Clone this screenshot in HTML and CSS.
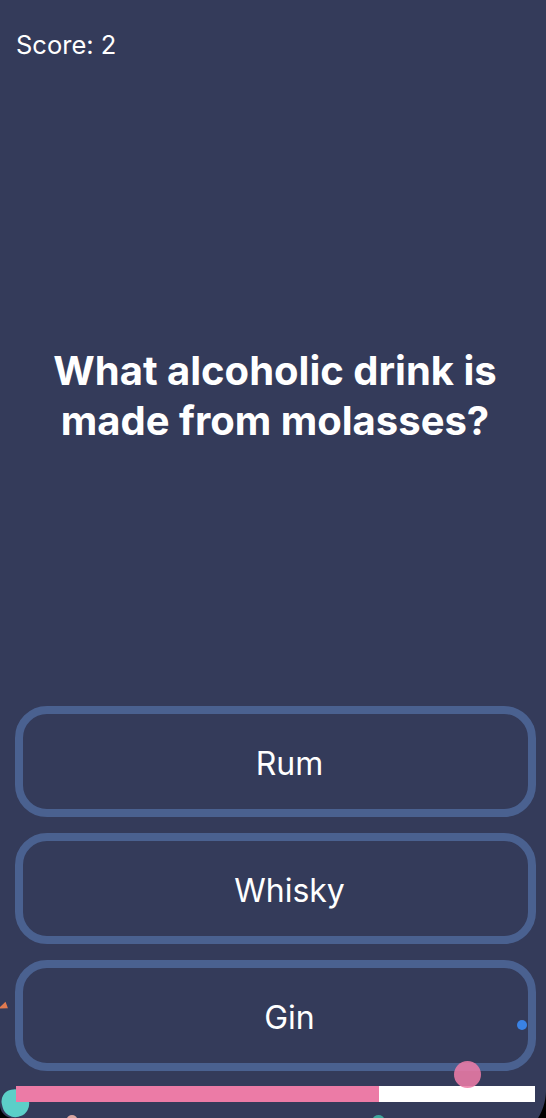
FILE: index.html
```html
<!DOCTYPE html>
<html lang="en">
<head>
<meta charset="utf-8">
<title>Quiz</title>
<link rel="stylesheet" href="styles.css">
</head>
<body>
<div class="screen">
  <div class="score">Score: 2</div>
  <div class="question-area">
    <h1 class="question">What alcoholic drink is<br>made from molasses?</h1>
  </div>
  <div class="answers">
    <button class="answer">Rum</button>
    <button class="answer">Whisky</button>
    <button class="answer">Gin</button>
  </div>
  <div class="progress"><div class="progress-fill" style="width:70%"></div></div>

  <span class="confetti c-orange"></span>
  <span class="confetti c-blue"></span>
  <span class="confetti c-pink"></span>
  <span class="confetti c-teal"></span>
  <span class="confetti c-peach"></span>
  <span class="confetti c-teal2"></span>
  <span class="corner c-left"></span>
  <span class="corner c-right"></span>
</div>
</body>
</html>
```
FILE: styles.css
```css
html, body {
  margin: 0;
  padding: 0;
  background: #343b5a;
}
.screen {
  position: relative;
  width: 546px;
  height: 1118px;
  overflow: hidden;
  display: flex;
  flex-direction: column;
  font-family: Inter, "Noto Sans", sans-serif;
  color: #ffffff;
  background: #343b5a;
}
.score {
  padding: 29px 0 0 16px;
  font-size: 25.5px;
  line-height: 32px;
  font-weight: 400;
}
.question-area {
  flex: 1;
  display: flex;
  align-items: center;
  justify-content: center;
  padding-top: 24px;
}
.question {
  margin: 0;
  text-align: center;
  font-size: 40px;
  line-height: 50px;
  font-weight: 700;
  padding-left: 4px;
}
.answers {
  display: flex;
  flex-direction: column;
  gap: 16px;
  padding: 0 10px 0 15px;
}
.answer {
  height: 111px;
  border: 8px solid #4a6190;
  border-radius: 32px;
  background: transparent;
  color: #ffffff;
  font-family: Inter, "Noto Sans", sans-serif;
  font-size: 32px;
  font-weight: 400;
  padding: 3px 0 0 28px;
  text-align: center;
}
.progress {
  position: relative;
  z-index: 2;
  margin: 15px 11px 16px 16px;
  height: 16px;
  background: #ffffff;
  display: flex;
}
.progress-fill {
  background: #ec7ba6;
  height: 100%;
}
.confetti {
  position: absolute;
  display: block;
}
.c-orange {
  left: -2px;
  top: 1003px;
  width: 0;
  height: 0;
  border-top: 4px solid transparent;
  border-bottom: 3px solid transparent;
  border-right: 9px solid #e07a50;
  transform: rotate(-20deg);
}
.c-blue {
  left: 517px;
  top: 1020px;
  width: 10px;
  height: 10px;
  border-radius: 50%;
  background: #3a82e4;
}
.c-pink {
  left: 454px;
  top: 1061px;
  width: 27px;
  height: 27px;
  border-radius: 50%;
  background: rgba(236, 123, 166, 0.88);
  z-index: 3;
}
.c-teal {
  left: 2px;
  top: 1089px;
  width: 27px;
  height: 28px;
  border-radius: 45% 55% 50% 50%;
  background: #5ccfc8;
  transform: rotate(-15deg);
  z-index: 1;
}
.c-peach {
  left: 67px;
  top: 1115px;
  width: 10px;
  height: 8px;
  border-radius: 50%;
  background: #d9a5a0;
}
.c-teal2 {
  left: 373px;
  top: 1115px;
  width: 11px;
  height: 8px;
  border-radius: 50%;
  background: #3ea79d;
}
.corner {
  position: absolute;
  bottom: 0;
  width: 60px;
  height: 60px;
  z-index: 5;
}
.c-left {
  left: 0;
  background: radial-gradient(circle 13px at 13px 47px, transparent 12.5px, #000 13.5px);
  clip-path: polygon(0 47px, 13px 47px, 13px 60px, 0 60px);
}
.c-right {
  right: 0;
  background: radial-gradient(circle 53px at 7px 32px, transparent 52.5px, #000 53.5px);
  clip-path: polygon(7px 32px, 60px 32px, 60px 60px, 7px 60px);
}
```
